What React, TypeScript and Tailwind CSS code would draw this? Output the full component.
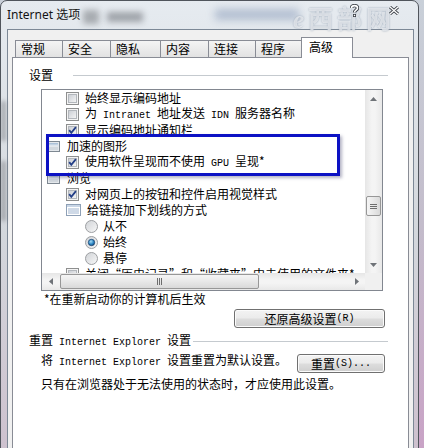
import React from 'react';

type Kind = 'group' | 'check' | 'list' | 'radio';

interface Row {
  kind: Kind;
  checked?: boolean;
  label: React.ReactNode;
}

// SimSun-ish latin glyphs
function M({ children }: { children: React.ReactNode }) {
  return <span className="font-['Liberation_Mono','Courier_New',monospace] text-[10px]">{children}</span>;
}

function CheckBox({ checked }: { checked?: boolean }) {
  return (
    <svg width="13" height="13" viewBox="0 0 13 13" className="shrink-0">
      <defs>
        <linearGradient id="cbg" x1="0" y1="0" x2="1" y2="1">
          <stop offset="0" stopColor="#c9cdd3" />
          <stop offset="1" stopColor="#f6f6f6" />
        </linearGradient>
      </defs>
      <rect x="0.5" y="0.5" width="12" height="12" fill="#f4f4f4" stroke="#8e8f8f" />
      <rect x="2.5" y="2.5" width="8" height="8" fill="url(#cbg)" stroke="#b3b7bc" />
      {checked && <path d="M3.2 6.1 L5.3 8.7 L9.9 3.1" fill="none" stroke="#243f87" strokeWidth="1.8" />}
    </svg>
  );
}

function Radio({ checked }: { checked?: boolean }) {
  return (
    <svg width="13" height="13" viewBox="0 0 13 13" className="shrink-0">
      <defs>
        <linearGradient id="rbg" x1="0" y1="0" x2="1" y2="1">
          <stop offset="0" stopColor="#cfd2d6" />
          <stop offset="1" stopColor="#f8f8f8" />
        </linearGradient>
        <radialGradient id="rdot" cx="0.4" cy="0.35" r="0.7">
          <stop offset="0" stopColor="#a6dcf5" />
          <stop offset="0.6" stopColor="#2c86c4" />
          <stop offset="1" stopColor="#13477c" />
        </radialGradient>
      </defs>
      <circle cx="6.5" cy="6.5" r="6" fill="url(#rbg)" stroke="#9d9fa2" />
      {checked && <circle cx="6.5" cy="6.5" r="3.2" fill="url(#rdot)" stroke="#173e6a" strokeWidth="0.7" />}
    </svg>
  );
}

function GroupIcon() {
  return (
    <svg width="13" height="11" viewBox="0 0 13 11" className="shrink-0">
      <defs>
        <linearGradient id="gi" x1="0" y1="0" x2="0" y2="1">
          <stop offset="0" stopColor="#9fb8d2" />
          <stop offset="1" stopColor="#e9eef4" />
        </linearGradient>
      </defs>
      <rect x="0.5" y="0.5" width="12" height="10" fill="#e4e8ec" stroke="#7e8892" />
      <rect x="2" y="2" width="9" height="3" fill="url(#gi)" />
      <rect x="2" y="6" width="9" height="3" fill="#d2d8de" />
    </svg>
  );
}

function ListIcon() {
  return (
    <svg width="15" height="12" viewBox="0 0 15 12" className="shrink-0">
      <rect x="0.5" y="0.5" width="14" height="11" fill="#ffffff" stroke="#8ea0b6" />
      <rect x="1" y="1" width="13" height="2" fill="#c9d6e6" />
      <line x1="2" y1="5" x2="13" y2="5" stroke="#9fb4cf" />
      <line x1="2" y1="7" x2="13" y2="7" stroke="#9fb4cf" />
      <line x1="2" y1="9" x2="13" y2="9" stroke="#9fb4cf" />
    </svg>
  );
}

const rows: Row[] = [
  { kind: 'check', label: '始终显示编码地址' },
  { kind: 'check', label: <>为<M> Intranet </M>地址发送<M> IDN </M>服务器名称</> },
  { kind: 'check', checked: true, label: '显示编码地址通知栏' },
  { kind: 'group', label: '加速的图形' },
  { kind: 'check', checked: true, label: <>使用软件呈现而不使用<M> GPU </M>呈现*</> },
  { kind: 'group', label: '浏览' },
  { kind: 'check', checked: true, label: '对网页上的按钮和控件启用视觉样式' },
  { kind: 'list', label: '给链接加下划线的方式' },
  { kind: 'radio', label: '从不' },
  { kind: 'radio', checked: true, label: '始终' },
  { kind: 'radio', label: '悬停' },
  { kind: 'check', label: '关闭“历史记录”和“收藏夹”中未使用的文件夹*' },
];

function ListRow({ row }: { row: Row }) {
  if (row.kind === 'group') {
    return (
      <div className="h-[16px] flex items-center gap-[7px] pl-[5px] whitespace-nowrap leading-[16px]">
        <GroupIcon />
        <span>{row.label}</span>
      </div>
    );
  }
  if (row.kind === 'radio') {
    return (
      <div className="h-[16px] flex items-center gap-[5px] pl-[43px] whitespace-nowrap leading-[16px]">
        <Radio checked={row.checked} />
        <span>{row.label}</span>
      </div>
    );
  }
  return (
    <div className="h-[16px] flex items-center gap-[6px] pl-[24px] whitespace-nowrap leading-[16px]">
      {row.kind === 'list' ? <ListIcon /> : <CheckBox checked={row.checked} />}
      <span>{row.label}</span>
    </div>
  );
}

function Arrow({ dir }: { dir: 'up' | 'down' | 'left' | 'right' }) {
  const pts = {
    up: '0,4 3.5,0 7,4',
    down: '0,0 3.5,4 7,0',
    left: '4,0 0,3.5 4,7',
    right: '0,0 4,3.5 0,7',
  }[dir];
  const vertical = dir === 'up' || dir === 'down';
  return (
    <svg width={vertical ? 7 : 4} height={vertical ? 4 : 7} viewBox={vertical ? '0 0 7 4' : '0 0 4 7'}>
      <polygon points={pts} fill="#6f7378" />
    </svg>
  );
}

function Button({ w, children }: { w: string; children: React.ReactNode }) {
  return (
    <div
      className={`${w} h-[19px] rounded-[3px] border border-[#707070] bg-[linear-gradient(#f3f3f3,#ebebeb_48%,#dddddd_52%,#cfcfcf)] shadow-[inset_0_0_0_1px_#fbfbfb] flex items-center justify-center leading-none`}
    >
      {children}
    </div>
  );
}

const tabs = [
  { name: '常规', w: 'w-[47px]' },
  { name: '安全', w: 'w-[48px]' },
  { name: '隐私', w: 'w-[50px]' },
  { name: '内容', w: 'w-[48px]' },
  { name: '连接', w: 'w-[47px]' },
  { name: '程序', w: 'w-[46px]' },
];

export default function App() {
  return (
    <div className="relative w-[424px] h-[448px] overflow-hidden bg-gradient-to-b from-[#c9d0d9] via-[#c3bccb] to-[#c9a3c6] font-['Noto_Sans_CJK_SC',sans-serif] text-[12px] text-black">
      <div className="relative w-[419px] h-[470px] rounded-t-[7px] border border-[#50555c] bg-gradient-to-b from-[#e6ebf0] via-[#d3d7dc] to-[#cdbfcd] flex flex-col overflow-hidden">
        {/* blurred glass behind the frame */}
        <span className="absolute left-[82px] top-[9px] w-[16px] h-[14px] bg-[#6b6e73] blur-[3px] opacity-50" />
        <span className="absolute left-[106px] top-[11px] w-[36px] h-[10px] bg-[#5b5f66] blur-[3px] opacity-50" />
        <span className="absolute left-[214px] top-[8px] w-[84px] h-[11px] bg-[#7f93b3] blur-[4px] opacity-50" />
        <span className="absolute left-[0px] top-[100px] w-[5px] h-[40px] bg-[#6f7176] blur-[2px] opacity-50" />
        <span className="absolute left-[0px] top-[160px] w-[5px] h-[60px] bg-[#6f7176] blur-[2px] opacity-50" />
        <span className="absolute left-[292px] top-[3px] text-[25px] leading-[26px] font-bold tracking-[4px] text-white/60 blur-[0.7px] [text-shadow:0_0_2px_#95a2b3]">
          <span className="italic font-['Liberation_Serif',serif]">e</span>西部网
        </span>

        {/* title bar */}
        <div className="relative h-[28px] shrink-0 flex items-center pl-[6px]">
          <span className="font-['Noto_Sans','Noto_Sans_CJK_SC',sans-serif] text-[12px] text-[#141414]">Internet 选项</span>
          <div className="ml-auto flex items-center gap-[30px] pr-[19px] -mt-[10px]">
            <svg width="9" height="13" viewBox="0 0 9 13">
              <path d="M1.5 4 C1.5 0.8 7.5 0.8 7.5 4 C7.5 6.3 4.5 6 4.5 8.5" fill="none" stroke="#3a3f46" strokeWidth="3.4" />
              <path d="M1.5 4 C1.5 0.8 7.5 0.8 7.5 4 C7.5 6.3 4.5 6 4.5 8.5" fill="none" stroke="#ffffff" strokeWidth="1.6" />
              <rect x="3" y="10" width="3" height="3" fill="#3a3f46" />
              <rect x="3.8" y="10.8" width="1.4" height="1.4" fill="#ffffff" />
            </svg>
            <svg width="10" height="9" viewBox="0 0 10 9">
              <path d="M1 1 L9 8 M9 1 L1 8" stroke="#3a3f46" strokeWidth="3" />
              <path d="M1 1 L9 8 M9 1 L1 8" stroke="#ffffff" strokeWidth="1.3" />
            </svg>
          </div>
        </div>

        {/* client area */}
        <div className="flex-1 ml-[6px] mr-[4px] border border-[#7c8896] bg-[#f0f0f0] px-[4px] pt-[7px] flex flex-col">
          {/* tabs */}
          <div className="relative z-10 h-[20px] flex items-end pl-[3px]">
            {tabs.map((t) => (
              <div
                key={t.name}
                className={`${t.w} h-[17px] border-l border-t border-[#898c95] bg-gradient-to-b from-[#f4f4f4] to-[#e2e2e2] pl-[5px] flex items-center leading-none`}
              >
                {t.name}
              </div>
            ))}
            <div className="w-[52px] h-[21px] -mb-[1px] border-x border-t border-[#898c95] bg-white pl-[7px] pb-[2px] flex items-center leading-none">
              高级
            </div>
          </div>

          {/* tab panel */}
          <div className="flex-1 border border-[#898c95] bg-white flex flex-col">
            <div className="mt-[10px] ml-[16px] mr-[20px] h-[14px] flex items-center">
              <span className="leading-[14px]">设置</span>
              <div className="flex-1 ml-[20px] h-px bg-[#c5cacf]" />
            </div>

            {/* list box */}
            <div className="relative mt-[7px] ml-[28px] mr-[25px] h-[202px] border border-[#828790] flex flex-col">
              <div className="h-[183px] flex">
                <div className="flex-1 overflow-hidden flex flex-col">
                  {rows.map((r, i) => (
                    <ListRow key={i} row={r} />
                  ))}
                </div>
                <div className="w-[17px] bg-[linear-gradient(90deg,#e6e6e6,#f4f4f4_40%,#f4f4f4_60%,#e8e8e8)] flex flex-col">
                  <div className="h-[17px] flex items-center justify-center">
                    <Arrow dir="up" />
                  </div>
                  <div className="h-[89px]" />
                  <div className="mx-[1px] h-[20px] rounded-[2px] border border-[#979797] bg-[linear-gradient(90deg,#f5f5f5,#e8e8e8_50%,#d9d9d9)] flex flex-col items-center justify-center gap-[1px]">
                    <span className="w-[7px] h-px bg-[#6d6d6d]" />
                    <span className="w-[7px] h-px bg-[#6d6d6d]" />
                    <span className="w-[7px] h-px bg-[#6d6d6d]" />
                  </div>
                  <div className="flex-1" />
                  <div className="h-[17px] flex items-center justify-center">
                    <Arrow dir="down" />
                  </div>
                </div>
              </div>
              <div className="h-[17px] flex">
                <div className="flex-1 bg-[linear-gradient(#e6e6e6,#f4f4f4_40%,#f4f4f4_60%,#e8e8e8)] flex items-center">
                  <div className="w-[17px] h-full flex items-center justify-center">
                    <Arrow dir="left" />
                  </div>
                  <div className="ml-[1px] w-[199px] h-[15px] rounded-[2px] border border-[#979797] bg-[linear-gradient(#f5f5f5,#e8e8e8_50%,#d9d9d9)] flex items-center justify-center gap-[1px]">
                    <span className="w-px h-[7px] bg-[#6d6d6d]" />
                    <span className="w-px h-[7px] bg-[#6d6d6d]" />
                    <span className="w-px h-[7px] bg-[#6d6d6d]" />
                  </div>
                  <div className="flex-1" />
                  <div className="w-[17px] h-full flex items-center justify-center">
                    <Arrow dir="right" />
                  </div>
                </div>
                <div className="w-[17px] bg-[#f0f0f0]" />
              </div>

              {/* annotation */}
              <div className="absolute left-[4px] top-[44px] w-[294px] h-[42px] border-[3px] border-[#0c12c4] shadow-[2px_2px_3px_rgba(40,40,90,0.35)]" />
            </div>

            <div className="mt-[1px] ml-[31px] h-[14px] leading-[14px]">*在重新启动你的计算机后生效</div>

            <div className="mt-[3px] mr-[23px] flex justify-end">
              <Button w="w-[151px]">
                还原高级设置<M>(R)</M>
              </Button>
            </div>

            <div className="mt-[6px] ml-[16px] mr-[20px] h-[14px] flex items-center">
              <span className="leading-[14px] whitespace-nowrap">
                重置<M> Internet Explorer </M>设置
              </span>
              <div className="flex-1 ml-[2px] h-px bg-[#c5cacf]" />
            </div>

            <div className="mt-[6px] ml-[28px] mr-[23px] h-[19px] flex items-center justify-between">
              <span className="pb-[5px] leading-[14px] whitespace-nowrap">
                将<M> Internet Explorer </M>设置重置为默认设置。
              </span>
              <Button w="w-[88px]">
                重置<M>(S)...</M>
              </Button>
            </div>

            <div className="mt-[4px] ml-[28px] h-[14px] leading-[14px] whitespace-nowrap">
              只有在浏览器处于无法使用的状态时，才应使用此设置。
            </div>
          </div>
        </div>
      </div>
    </div>
  );
}
